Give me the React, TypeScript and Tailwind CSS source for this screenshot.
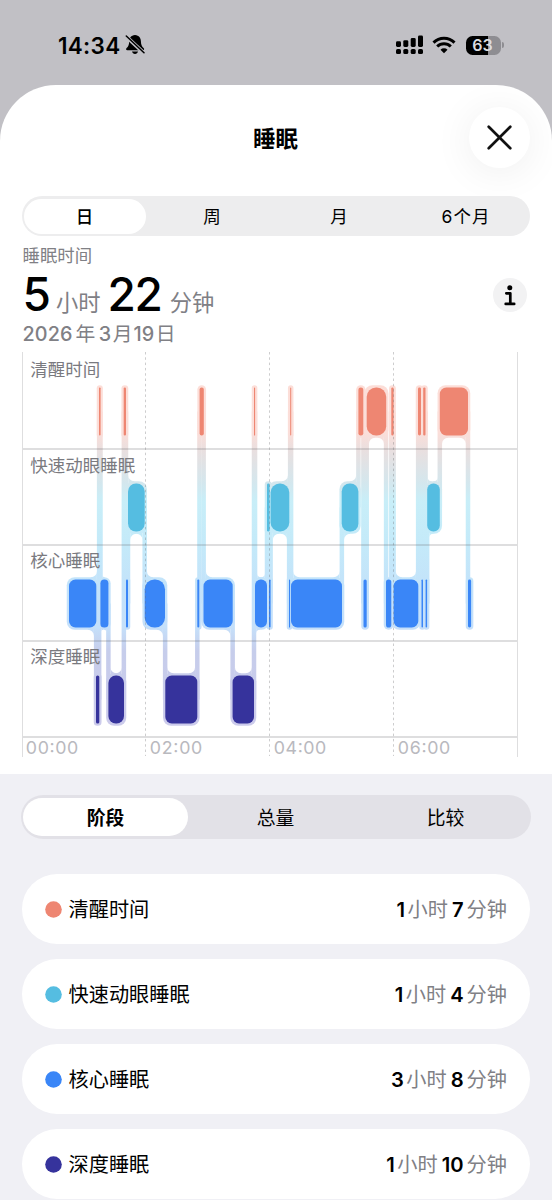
import { clsx } from 'clsx';

type Stage = 'awake' | 'rem' | 'core' | 'deep';

const STAGES: { key: Stage; label: string; color: string; hours: number; minutes: number }[] = [
  { key: 'awake', label: '清醒时间',     color: '#ee8672', hours: 1, minutes: 7 },
  { key: 'rem',   label: '快速动眼睡眠', color: '#55bde1', hours: 1, minutes: 4 },
  { key: 'core',  label: '核心睡眠',     color: '#3a86f7', hours: 3, minutes: 8 },
  { key: 'deep',  label: '深度睡眠',     color: '#36339c', hours: 1, minutes: 10 },
];

// [stage, start x, end x] in night order
const SEGMENTS: [Stage, number, number][] = [
  ['core', 69, 96.3],
  ['deep', 96, 99.3],
  ['awake', 99, 100.6],
  ['core', 100.4, 108.4],
  ['deep', 108.4, 124],
  ['awake', 123.7, 126],
  ['core', 126, 128],
  ['rem', 128, 144.7],
  ['core', 144.7, 165],
  ['deep', 165.3, 197.3],
  ['core', 197.3, 199.3],
  ['awake', 199.6, 203.8],
  ['core', 203.5, 232.7],
  ['deep', 232.6, 254],
  ['awake', 254, 255.1],
  ['core', 255, 267],
  ['rem', 267, 269.6],
  ['core', 269, 270.6],
  ['rem', 270.6, 289.3],
  ['core', 289, 290.1],
  ['awake', 290.2, 291.2],
  ['core', 291, 342],
  ['rem', 341.7, 358.4],
  ['awake', 358.4, 363.3],
  ['core', 363.5, 366.7],
  ['awake', 366.7, 386.2],
  ['core', 386, 391.3],
  ['awake', 391.3, 393.6],
  ['core', 393.6, 418.3],
  ['awake', 418, 421],
  ['core', 421.5, 423],
  ['awake', 423.2, 425.5],
  ['core', 425.6, 427.1],
  ['rem', 427.2, 439.8],
  ['awake', 439.8, 468],
  ['core', 468, 471.1],
];

const ROW_H = 96;
const BAR_TOP = 37.5;
const BAR_H = 48;
const PAD = 2.25;

const bars = SEGMENTS.map(([stage, start, end]) => {
  const row = STAGES.findIndex(s => s.key === stage);
  const w = end - start;
  return { start, end, w, row, y: BAR_TOP + row * ROW_H, r: w < 21 ? w * 0.48 : 6.5, color: STAGES[row].color };
});

const links = bars.slice(1).map((b, i) => {
  const a = bars[i];
  return { x: (a.end + b.start) / 2, top: Math.min(a.row, b.row), bottom: Math.max(a.row, b.row) };
});

// Concave corners where a vertical link meets the flat edge of a bar's halo
const fillets: string[] = [];
bars.forEach(b => {
  if (b.w < 7) return;
  const r = Math.min(6, (b.w - 2 * PAD) / 2);
  [-1, 1].forEach(side => {
    const edge = side === 1 ? b.end : b.start;
    [-1, 1].forEach(dir => {
      const near = links.filter(l => {
        const dist = (l.x - edge) * side;
        const passes = dir === -1 ? l.top < b.row && l.bottom >= b.row : l.bottom > b.row && l.top <= b.row;
        return passes && dist > -1 && dist < 4.6;
      });
      if (!near.length) return;
      const x = side === 1 ? Math.min(...near.map(l => l.x)) - PAD : Math.max(...near.map(l => l.x)) + PAD;
      const y = dir === -1 ? b.y - PAD : b.y + BAR_H + PAD;
      const sweep = side * dir === -1 ? 0 : 1;
      fillets.push(`M${x - side * r} ${y}A${r} ${r} 0 0 ${sweep} ${x} ${y + dir * r}V${y - dir * 8}H${x - side * r}Z`);
    });
  });
});

const CJK = 'font-[Inter,"Noto_Sans_CJK_SC",sans-serif]';

function SleepChart() {
  return (
    <svg width="552" height="410" viewBox="0 0 552 410" className="block">
      <defs>
        <linearGradient id="halo" gradientUnits="userSpaceOnUse" x1="0" y1="35" x2="0" y2="376">
          <stop offset="0" stopColor="#fcded8" />
          <stop offset="0.14" stopColor="#fbded9" />
          <stop offset="0.19" stopColor="#e9dfdf" />
          <stop offset="0.29" stopColor="#d3e7ee" />
          <stop offset="0.34" stopColor="#c8eef8" />
          <stop offset="0.46" stopColor="#c4eaf9" />
          <stop offset="0.6" stopColor="#c3e2fa" />
          <stop offset="0.71" stopColor="#c5e0fa" />
          <stop offset="0.78" stopColor="#c6cdeb" />
          <stop offset="1" stopColor="#cccbeb" />
        </linearGradient>
      </defs>

      <g fill="url(#halo)">
        {bars.map((b, i) => (
          <rect key={i} x={b.start - PAD} y={b.y - PAD} width={b.w + PAD * 2} height={BAR_H + PAD * 2} rx={Math.min(b.r + PAD, 8)} />
        ))}
        {links.map((l, i) => (
          <rect key={i} x={l.x - PAD} y={BAR_TOP + 24 + l.top * ROW_H} width={PAD * 2} height={(l.bottom - l.top) * ROW_H} />
        ))}
        {fillets.map((d, i) => <path key={i} d={d} />)}
      </g>

      {bars.map((b, i) => (
        <rect key={i} x={b.start} y={b.y} width={b.w} height={BAR_H} rx={b.r} fill={b.color} />
      ))}

      {/* Grid */}
      <g stroke="#6b6b70">
        {[99, 195, 291, 387].map(y => <path key={y} d={`M22 ${y}H518`} strokeWidth="1.1" strokeOpacity="0.45" />)}
        {[145.5, 269.5, 393.5].map(x => <path key={x} d={`M${x} 2V406`} strokeDasharray="2.5 2.8" strokeOpacity="0.34" />)}
      </g>
      <path d="M22.5 2V407M517.5 2V407" stroke="#dededf" />

      {/* Labels */}
      <g className={clsx(CJK, 'text-[17.5px]')} fill="#7a7a7f">
        {STAGES.map((s, i) => (
          <text key={s.key} x="30.2" y={25.6 + i * 95.9}>{s.label}</text>
        ))}
      </g>
      <g className="font-[Inter,sans-serif] text-[17.8px]" fill="#b9b9be">
        {['00:00', '02:00', '04:00', '06:00'].map((t, i) => (
          <text key={t} x={25.8 + i * 124} y="404" textLength="52.5">{t}</text>
        ))}
      </g>
    </svg>
  );
}

function StatusBar() {
  return (
    <div className="h-[85px] pt-8 pl-[58px] pr-[48px] flex items-start">
      <span className="text-[22.5px] leading-[27px] font-semibold tracking-[0.3px] w-[67px] whitespace-nowrap">14:34</span>
      <svg width="20" height="21" viewBox="0 0 20 21" className="mt-[2px]">
        <path d="M10 1C5.9 1.4 4.3 4.2 4.2 7.2c-.1 4-1 5.4-2.6 6.8-.9.8-.6 2.2.7 2.2h15.6c1.3 0 1.6-1.4.7-2.2-1.6-1.4-2.6-2.8-2.7-6.8C15.8 4.2 14.1 1.4 10 1z" />
        <path d="M7 17.6h6c-.4 1.5-1.5 2.3-3 2.3s-2.6-.8-3-2.3z" />
        <path d="M0 1.4L20 20" stroke="#c1c0c5" strokeWidth="3.7" />
        <path d="M1.3 2L19 18.800" stroke="#000" strokeWidth="1.5" strokeLinecap="round" />
      </svg>
      <div className="ml-auto flex items-center pt-[3px]">
        <svg width="28" height="20" viewBox="0 0 28 20">
          {[[0, 6.2], [7.3, 5.2], [14.7, 3], [22, 0.6]].map(([x, y]) => (
            <g key={x}>
              <rect x={x} y={y} width="5" height={12 - y} rx="1.4" />
              <rect x={x} y="14" width="5" height="5" rx="1.6" />
            </g>
          ))}
        </svg>
        <svg width="24" height="18" viewBox="0 0 24 18" className="ml-[8px] mr-px">
          <path d="M12 17.2L8.5 13.7a5 5 0 0 1 7 0z" />
          <path d="M5.2 10.5a9.7 9.7 0 0 1 13.6 0M1.5 6.6a15 15 0 0 1 21 0" fill="none" stroke="#000" strokeWidth="3" />
        </svg>
        <div className="ml-[9px] w-[35px] h-[19px] rounded-[6.5px] bg-[linear-gradient(90deg,#000_63%,#8e8d92_63%)] text-[#dcdce0] text-[16px] leading-[19px] font-semibold text-center pr-[2px]">63</div>
        <div className="ml-[1px] w-[2px] h-[6px] rounded-r-full bg-[#8e8d92]" />
      </div>
    </div>
  );
}

export default function App() {
  return (
    <div lang="zh-CN" className={clsx(CJK, 'w-[552px] h-[1200px] overflow-hidden bg-[#c1c0c5] text-black')}>
      <StatusBar />

      <main className="h-[1115px] bg-white rounded-t-[56px] overflow-hidden flex flex-col">
        {/* Title */}
        <header className="h-[111px] shrink-0 flex items-start justify-end pt-[22px] pr-[22px]">
          <h1 className="flex-1 pl-[82px] pt-[17px] text-center text-[22.5px] leading-[30px] font-bold">睡眠</h1>
          <button className="size-[61px] rounded-full bg-white flex items-center justify-center shadow-[0_4px_40px_rgba(0,0,0,0.07)]">
            <svg width="26" height="26" viewBox="0 0 26 26" fill="none" stroke="#111" strokeWidth="2.7" strokeLinecap="round">
              <path d="M1.7 1.7L23.3 23.3M23.3 1.7L1.7 23.3" />
            </svg>
          </button>
        </header>

        {/* Range tabs */}
        <div className="mx-[22px] h-10 shrink-0 rounded-full bg-[#ededee] flex items-center text-[17.5px]">
          {['日', '周', '月', '6个月'].map((t, i) => (
            <div key={t} className="flex-1 flex justify-center">
              <span className={clsx('h-[35px] leading-[36px] text-center w-[122px] rounded-full', i === 0 ? 'mr-[2px] bg-white font-medium' : 'mr-[1px] font-normal', i === 3 && 'tracking-[1px]')}>{t}</span>
            </div>
          ))}
        </div>

        {/* Summary */}
        <section className="h-[114px] shrink-0 px-[22.5px] pt-[7px] text-[#808085] flex justify-between">
          <div>
            <p className="text-[17.4px] leading-[25px] h-6">睡眠时间</p>
            <p className="flex items-baseline text-[22.3px] h-[50px] leading-[54px]">
              <span className="text-black text-[46px] font-medium">5</span>
              <span className="ml-[5px]">小时</span>
              <span className="ml-[7px] text-black text-[46px] font-medium tracking-[-1.3px]">22</span>
              <span className="ml-[8px]">分钟</span>
            </p>
            <p className="flex text-[19.8px] leading-[30px] mt-[2px]">
              <span className="font-medium tracking-[0.1px]">2026</span>
              <span className="ml-[3px]">年</span>
              <span className="ml-[3.5px] font-medium">3</span>
              <span className="ml-[1.5px]">月</span>
              <span className="ml-[1px] font-medium">19</span>
              <span className="ml-[1.5px]">日</span>
            </p>
          </div>
          <button className="mt-[35px] mr-[3px] size-[34px] rounded-full bg-[#f2f2f3] flex items-center justify-center">
            <svg width="12" height="21" viewBox="0 0 12 21">
              <circle cx="5.8" cy="2.8" r="2.5" />
              <path d="M2.3 8.3H6.3V18.7M1.7 18.9H10.2" fill="none" stroke="#000" strokeWidth="2.7" strokeLinecap="round" strokeLinejoin="round" />
            </svg>
          </button>
        </section>

        <div className="h-[424px] shrink-0">
          <SleepChart />
        </div>

        {/* Breakdown */}
        <section className="flex-1 bg-[#f0f0f5] pt-[21px]">
          <div className="mx-[21px] h-11 rounded-full bg-[#e2e1e7] flex items-center text-[18.8px]">
            {['阶段', '总量', '比较'].map((t, i) => (
              <div key={t} className="flex-1 flex justify-center">
                <span className={clsx('h-[38px] leading-[41px] text-center w-[165px] mr-[1px] rounded-full', i === 0 ? 'bg-white font-bold' : 'font-normal')}>{t}</span>
              </div>
            ))}
          </div>

          <ul className="mt-[34.5px] mx-[22px] space-y-[14.5px]">
            {STAGES.map(s => (
              <li key={s.key} className="h-[70.5px] rounded-full bg-white flex items-center px-[23px] text-[20.2px]">
                <svg width="17" height="17" className="mr-[6.5px] mt-[1px]"><circle cx="8.5" cy="8.5" r="8.3" fill={s.color} /></svg>
                <span className="pt-[2px]">{s.label}</span>
                <span className="ml-auto pt-[2px] flex items-baseline text-[#808085]">
                  <b className="text-black font-semibold">{s.hours}</b>
                  <span className="ml-[2.5px]">小时</span>
                  <b className="ml-[4px] text-black font-semibold">{s.minutes}</b>
                  <span className="ml-[3px]">分钟</span>
                </span>
              </li>
            ))}
          </ul>
        </section>
      </main>
    </div>
  );
}
